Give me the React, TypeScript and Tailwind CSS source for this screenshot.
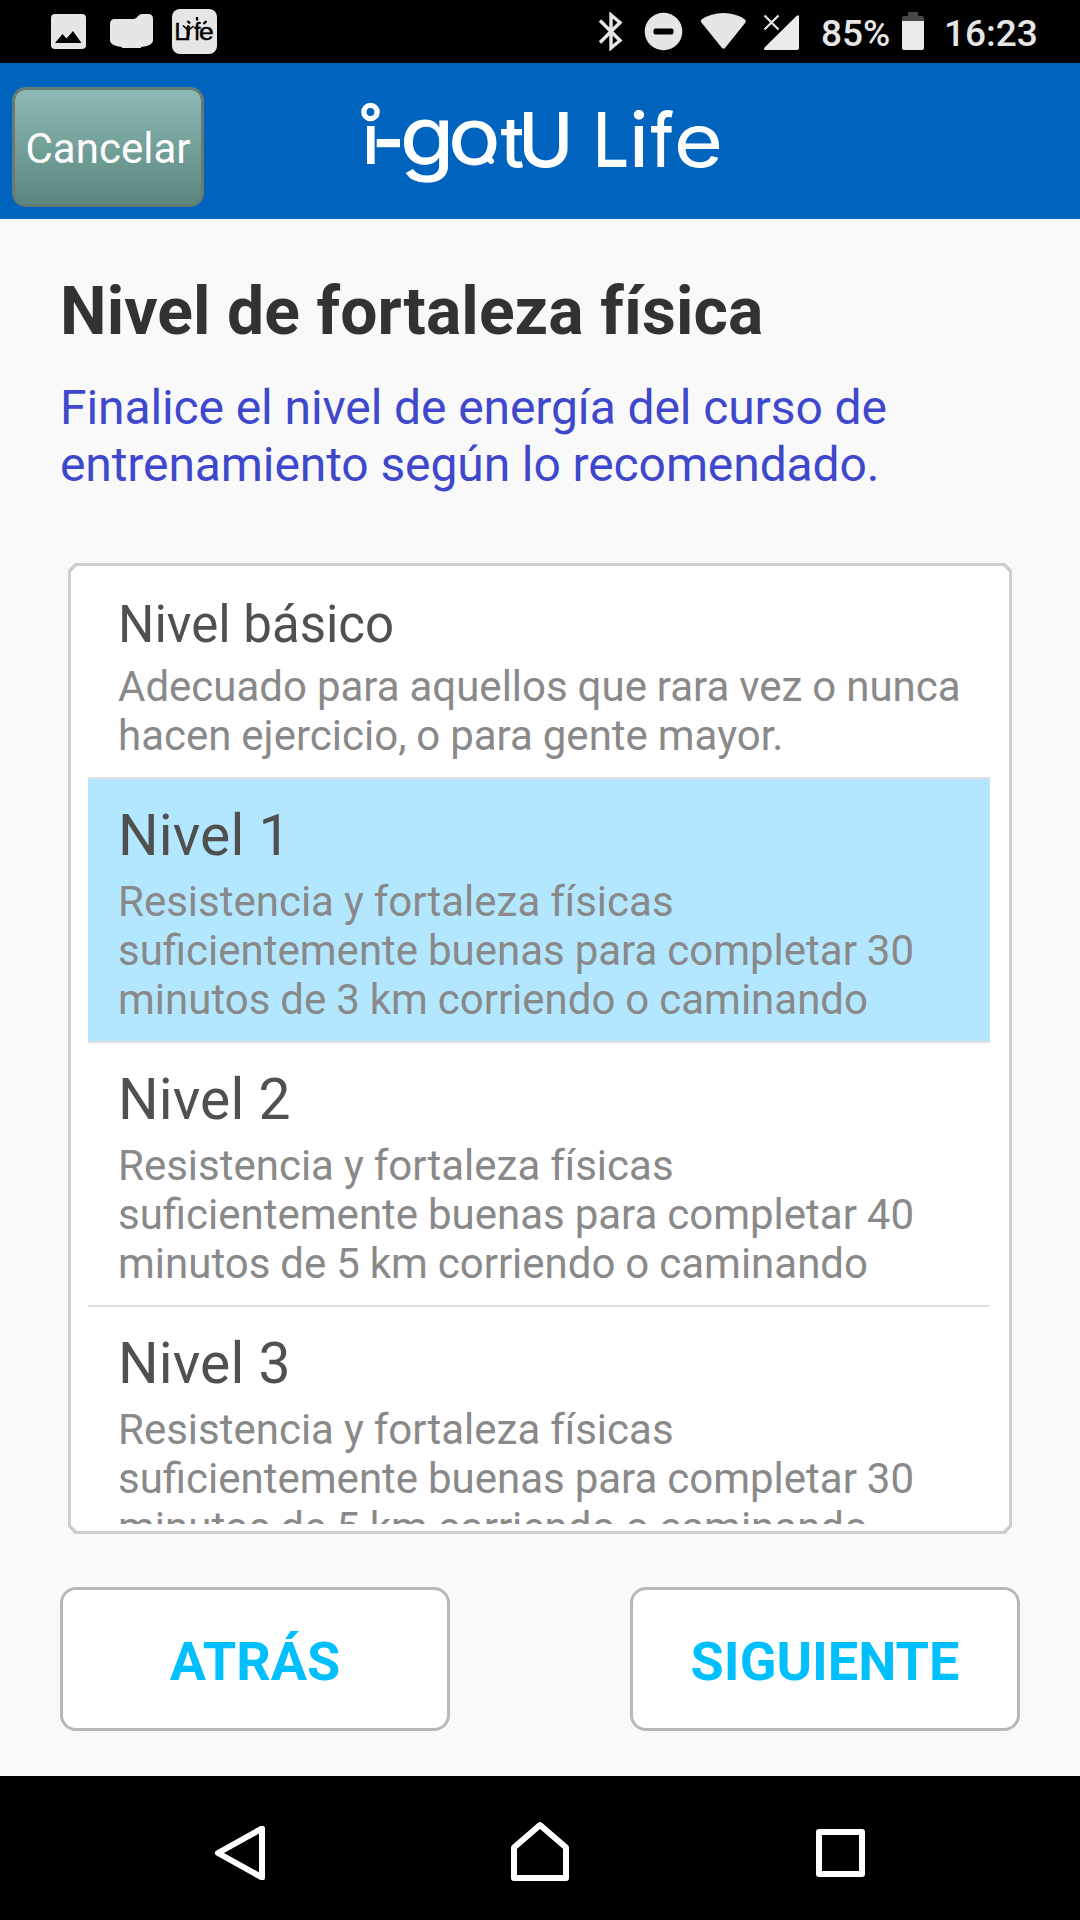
interface Level {
  id: string
  title: string
  description: string
}

const LEVELS: Level[] = [
  {
    id: 'basic',
    title: 'Nivel básico',
    description: 'Adecuado para aquellos que rara vez o nunca hacen ejercicio, o para gente mayor.',
  },
  {
    id: 'level-1',
    title: 'Nivel 1',
    description:
      'Resistencia y fortaleza físicas suficientemente buenas para completar 30 minutos de 3 km corriendo o caminando',
  },
  {
    id: 'level-2',
    title: 'Nivel 2',
    description:
      'Resistencia y fortaleza físicas suficientemente buenas para completar 40 minutos de 5 km corriendo o caminando',
  },
  {
    id: 'level-3',
    title: 'Nivel 3',
    description:
      'Resistencia y fortaleza físicas suficientemente buenas para completar 30 minutos de 5 km corriendo o caminando',
  },
]

export default function App() {
  return (
    <div className="flex h-[1920px] w-[1080px] flex-col overflow-hidden bg-[#f9f9f9] font-['Roboto',sans-serif]">
      <StatusBar />
      <Header />

      <main className="flex flex-1 flex-col px-[60px] pt-[54px]">
        <h1 className="text-[66px] leading-[77px] font-bold tracking-[0.09px] whitespace-nowrap text-[#323232]">
          Nivel de fortaleza física
        </h1>
        <p className="mt-[29px] text-[48px] leading-[57px] tracking-[-0.1px] text-[#3f48cc]">
          Finalice el nivel de energía del curso de entrenamiento según lo recomendado.
        </p>

        <LevelList selected="level-1" />

        <div className="mt-[53px] flex justify-between">
          <ActionButton label="ATRÁS" />
          <ActionButton label="SIGUIENTE" />
        </div>
      </main>

      <NavBar />
    </div>
  )
}

function StatusBar() {
  return (
    <div className="flex h-[63px] shrink-0 items-start bg-black text-[#e6e6e6]">
      {/* picture */}
      <svg className="mt-[14px] ml-[51px] h-[35px] w-[35px]" viewBox="0 0 35 35">
        <rect width="35" height="35" rx="4" fill="#e6e6e6" />
        <path d="M4 29 L11.500 20 L15.500 24.500 L22 17 L30.500 29 Z" fill="#000" />
      </svg>
      {/* folder */}
      <svg className="mt-[14px] ml-[24px] h-[34px] w-[43px]" viewBox="0 0 43 34">
        <path
          d="M5 5 H24 Q26 5 28 2 Q30 0 32 0 H38 Q43 0 43 5 V27 Q42 32 31 33 V34 H12 V33 Q1 32 0 27 V10 Q0 5 5 5 Z"
          fill="#e6e6e6"
        />
      </svg>
      {/* app notification */}
      <svg className="mt-[9px] ml-[19px] h-[45px] w-[45px]" viewBox="0 0 45 45">
        <rect width="45" height="45" rx="8" fill="#e6e6e6" />
        <g stroke="#000" strokeWidth="0.500" fontSize="23" className="font-['Liberation_Sans',sans-serif]">
          <text y="31" x="2.600 13.300 22">
            Lif
          </text>
          <text transform="translate(27 31) scale(1.150 1)">e</text>
        </g>
        {/* runner standing in for the i */}
        <rect x="14" y="13" width="6" height="5" fill="#e6e6e6" />
        <g stroke="#000" fill="none">
          <path d="M11 16.500 L16.300 21.500 L21.500 17" strokeWidth="1.600" />
          <path d="M16.500 21 V25 L15 31" strokeWidth="2.400" />
          <path d="M15.500 12 L18 14.500 M25 8 V11.500 M34.500 12 L31.500 15" strokeWidth="2.300" />
        </g>
        <circle cx="16.300" cy="18" r="1.700" />
      </svg>

      {/* bluetooth */}
      <svg className="mt-[12px] ml-[381px] h-[39px] w-[25px]" viewBox="0 0 25 39">
        <path
          d="M2 8.500 L22 28.500 L13 36 V3 L22 10.500 L2 30.500"
          fill="none"
          stroke="#e6e6e6"
          strokeWidth="3.400"
          strokeLinejoin="miter"
        />
      </svg>
      {/* do not disturb */}
      <svg className="mt-[12px] ml-[21px] h-[39px] w-[39px]" viewBox="0 0 39 39">
        <circle cx="19.500" cy="19.500" r="18.800" fill="#e6e6e6" />
        <rect x="9.500" y="16.500" width="20" height="6" rx="2" fill="#000" />
      </svg>
      {/* wifi */}
      <svg className="mt-[12px] ml-[17px] h-[38px] w-[47px]" viewBox="0 0 47 38">
        <path
          d="M1 10 Q0 9 1.500 7.500 Q11 1 23.500 1 Q36 1 45 7.500 Q46.500 9 45.500 10.500 L25 36 Q23.500 37.500 22 36 Z"
          fill="#e6e6e6"
        />
      </svg>
      {/* mobile signal, no service */}
      <svg className="mt-[14px] ml-[16px] h-[37px] w-[37px]" viewBox="0 0 37 37">
        <path d="M2 36 H34 Q36 36 36 34 V3 Q36 0 33.500 2 L2 33 Q0 36 2 36 Z" fill="#ebebeb" />
        <path d="M1.500 1.500 L15.500 15.500 M15.500 1.500 L1.500 15.500" stroke="#e6e6e6" strokeWidth="2.200" />
      </svg>
      <span className="mt-[12px] ml-[21px] w-[69px] text-[37px] leading-[44px] font-medium whitespace-nowrap">85%</span>
      <svg className="mt-[12px] ml-[12px] h-[38px] w-[22px]" viewBox="0 0 22 38">
        <path d="M6 0 H16 V4 H20 Q22 4 22 6 V9 H0 V6 Q0 4 2 4 H6 Z" fill="#474747" />
        <path d="M0 9 H22 V36 Q22 38 20 38 H2 Q0 38 0 36 Z" fill="#ebebeb" />
      </svg>
      <span className="mt-[12px] ml-[20px] text-[37px] leading-[44px] font-medium whitespace-nowrap">16:23</span>
    </div>
  )
}

function Header() {
  return (
    <header className="flex h-[156px] shrink-0 items-start bg-[#0063be] pt-[24px] pl-[12px]">
      <button className="h-[120px] w-[192px] rounded-[14px] border-[3px] border-[#647c74] bg-linear-to-b from-[#8dbab4] to-[#5b8780] pt-[2px] text-center text-[42px] leading-[49px] whitespace-nowrap text-white">
        Cancelar
      </button>
      <Logo />
    </header>
  )
}

function Logo() {
  return (
    <svg
      className="ml-[136px] h-[120px] w-[400px] font-['Inter',sans-serif]"
      viewBox="340 87 400 120"
      fill="#fff"
    >
      <text y="163.500" x="362" fontSize="70" fontWeight="500">
        i
      </text>
      <text y="163.500" x="372" fontSize="70" fontWeight="700">
        -
      </text>
      <g stroke="#fff" strokeWidth="0.800" fontSize="77">
        <text transform="translate(400 165) scale(1.150 1.050)">g</text>
        <text transform="translate(448.300 163.500) scale(1.130 1)">o</text>
      </g>
      <g fontWeight="500">
        <text y="167" x="500.500" fontSize="70">
          t
        </text>
        <text y="167" x="518" fontSize="75">
          U
        </text>
      </g>
      {/* ring in place of the dot, and the tail of the o */}
      <circle cx="370.500" cy="112" r="6.600" fill="#0063be" stroke="#fff" strokeWidth="5.400" />
      <path d="M487 156 L491 161" stroke="#fff" strokeWidth="6" strokeLinecap="round" />
      <g fontSize="75" fontWeight="500">
        <text transform="translate(593 167) scale(0.850 1)">L</text>
        <text transform="translate(629.500 167)">i</text>
        <text transform="translate(650.500 167) scale(0.820 1)">f</text>
      </g>
      <text transform="translate(673.700 167) scale(1.130 1)" fontSize="75">
        e
      </text>
    </svg>
  )
}

function LevelList({ selected }: { selected: string }) {
  return (
    <div className="mx-[8px] mt-[70px] h-[971px] shrink-0 bg-[#cecece] p-[3px] [clip-path:polygon(7px_0,calc(100%-7px)_0,100%_7px,100%_calc(100%-7px),calc(100%-7px)_100%,7px_100%,0_calc(100%-7px),0_7px)]">
      <div className="h-full bg-white pt-[4px] pr-[19px] pb-[7px] pl-[17px] [clip-path:polygon(6px_0,calc(100%-6px)_0,100%_6px,100%_calc(100%-6px),calc(100%-6px)_100%,6px_100%,0_calc(100%-6px),0_6px)]">
        <ul className="h-full overflow-hidden">
          {LEVELS.map((level) => (
            <li
              key={level.id}
              className={`border-b-2 border-[#e0e0e0] pt-[23px] pr-[28px] pb-[17px] pl-[30px] ${
                level.id === selected ? 'bg-[#b3e7ff]' : ''
              }`}
            >
              <p
                className={`text-[#505050] ${
                  level.id === 'basic'
                    ? 'mb-[6px] text-[51px] leading-[63px]'
                    : 'mb-[8px] text-[57px] leading-[67px] tracking-[0.1px]'
                }`}
              >
                {level.title}
              </p>
              <p className="text-[42px] leading-[49px] [word-spacing:-0.5px] text-[#898989]">{level.description}</p>
            </li>
          ))}
        </ul>
      </div>
    </div>
  )
}

function ActionButton({ label }: { label: string }) {
  return (
    <button className="h-[144px] w-[390px] rounded-[16px] border-[3px] border-[#b8b8b8] bg-white pt-[4px] text-[54px] leading-[63px] font-bold text-[#00bfff]">
      {label}
    </button>
  )
}

function NavBar() {
  return (
    <nav className="flex h-[144px] shrink-0 items-start bg-black">
      <svg className="mt-[50px] ml-[214px] h-[54px] w-[52px]" viewBox="0 0 52 54">
        <path d="M48 -1.500 V47.500 L4 23 Z" transform="translate(0 4)" fill="none" stroke="#fff" strokeWidth="6" strokeLinejoin="round" />
      </svg>
      <svg className="mt-[45px] ml-[244px] h-[60px] w-[60px]" viewBox="0 0 60 60">
        <path
          d="M4 57 V26.500 L30 4 L56 26.500 V57 Z"
          fill="none"
          stroke="#fff"
          strokeWidth="6"
          strokeLinejoin="round"
        />
      </svg>
      <svg className="mt-[53px] ml-[246px] h-[48px] w-[49px]" viewBox="0 0 49 48">
        <rect x="3" y="3" width="43" height="42" fill="none" stroke="#fff" strokeWidth="6" strokeLinejoin="round" />
      </svg>
    </nav>
  )
}
